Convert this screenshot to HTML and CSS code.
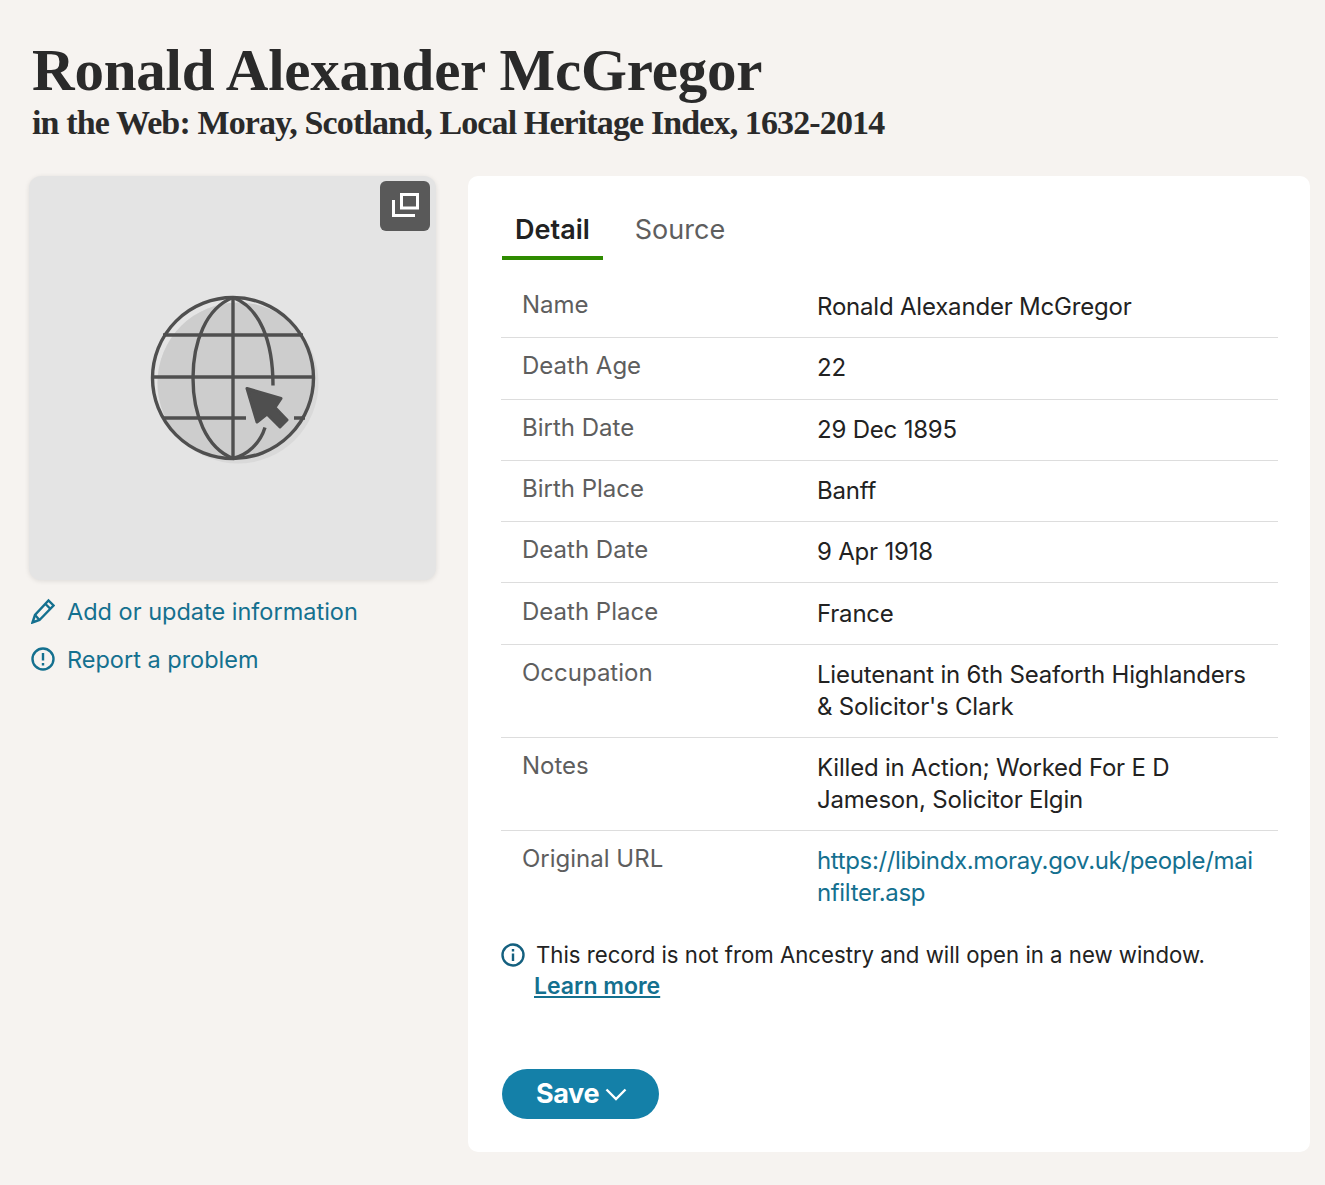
FILE: index.html
```html
<!DOCTYPE html>
<html lang="en">
<head>
    <meta charset="UTF-8">
    <title>Ronald Alexander McGregor</title>
    <link rel="stylesheet" href="styles.css">
</head>
<body>

<header class="page-title">
    <h1>Ronald Alexander McGregor</h1>
    <h2>in the Web: Moray, Scotland, Local Heritage Index, 1632-2014</h2>
</header>

<div class="layout">
    <!-- Left column -->
    <aside class="side">
        <div class="media">
            <button class="media-btn">
                <svg width="30" height="30" viewBox="0 0 30 30" fill="none" stroke="#fff" stroke-width="3">
                    <rect x="11.500" y="3.500" width="16" height="13.500"/>
                    <path d="M3.500 9v15.500h21.500"/>
                </svg>
            </button>
            <svg class="globe" width="176" height="176" viewBox="0 0 176 176" fill="none">
                <defs>
                    <clipPath id="globe-clip"><circle cx="84" cy="84" r="80.500"/></clipPath>
                </defs>
                <circle cx="89" cy="89" r="80.500" fill="#d9d9d9"/>
                <circle cx="89" cy="89" r="80.500" fill="#cdcdcd" clip-path="url(#globe-clip)"/>
                <g stroke="#4f4f4f" stroke-width="3.400">
                    <circle cx="84" cy="84" r="80.500"/>
                    <path d="M84 3.500v161"/>
                    <path d="M84 3.500C57 14 44 48 44 84s13 70 40 80.500"/>
                    <path d="M84 3.500c27 10 40 44 40 88"/>
                    <path d="M84 164.500c15-4 27-15 32-31"/>
                    <path d="M3.500 83h161"/>
                    <path d="M14 41h140"/>
                    <path d="M14 124h83M145 124h11"/>
                </g>
                <path d="M98 94.500l34 10-6 9 12 12.500-7 7-13-13-10 8z" fill="#4f4f4f" stroke="#4f4f4f" stroke-width="3" stroke-linejoin="round"/>
            </svg>
        </div>
        <a class="side-link" href="#">
            <svg width="24" height="26" viewBox="0 0 24 26" fill="none" stroke="#14708f" stroke-width="2.400">
                <path d="M1.500 24.500l2.500-7.500L17.500 2.500l5 5L8.500 22z"/>
                <path d="M14.500 6l5 5M4 17l4.500 5"/>
            </svg>
            Add or update information
        </a>
        <a class="side-link" href="#">
            <svg width="24" height="24" viewBox="0 0 24 24" fill="none" stroke="#14708f" stroke-width="2.400">
                <circle cx="12" cy="12" r="10.500"/>
                <path d="M12 6v7.500M12 16v2.500"/>
            </svg>
            Report a problem
        </a>
    </aside>

    <!-- Record card -->
    <main class="card">
        <nav class="tabs">
            <a class="tab active" href="#">Detail</a>
            <a class="tab" href="#">Source</a>
        </nav>

        <div class="facts">
            <div class="fact"><span class="label">Name</span><span class="value">Ronald Alexander McGregor</span></div>
            <div class="fact"><span class="label">Death Age</span><span class="value">22</span></div>
            <div class="fact"><span class="label">Birth Date</span><span class="value">29 Dec 1895</span></div>
            <div class="fact"><span class="label">Birth Place</span><span class="value">Banff</span></div>
            <div class="fact"><span class="label">Death Date</span><span class="value">9 Apr 1918</span></div>
            <div class="fact"><span class="label">Death Place</span><span class="value">France</span></div>
            <div class="fact"><span class="label">Occupation</span><span class="value">Lieutenant in 6th Seaforth Highlanders &amp; Solicitor's Clark</span></div>
            <div class="fact"><span class="label">Notes</span><span class="value">Killed in Action; Worked For E D Jameson, Solicitor Elgin</span></div>
            <div class="fact"><span class="label">Original URL</span><span class="value url"><a href="#">https://libindx.moray.gov.uk/people/mainfilter.asp</a></span></div>
        </div>

        <div class="notice">
            <svg width="24" height="24" viewBox="0 0 24 24" fill="none" stroke="#14607f" stroke-width="2.400">
                <circle cx="12" cy="12" r="10.500"/>
                <path d="M12 10.500v7.500M12 6v2.500"/>
            </svg>
            <p>This record is not from Ancestry and will open in a new window.<br><a href="#">Learn more</a></p>
        </div>

        <button class="save">Save
            <svg width="22" height="14" viewBox="0 0 22 14" fill="none" stroke="#fff" stroke-width="2.400">
                <path d="M1.500 2.500L11 12l9.500-9.500"/>
            </svg>
        </button>
    </main>
</div>

</body>
</html>
```

FILE: styles.css
```css
* { margin: 0; padding: 0; box-sizing: border-box; }
body { background: #f6f3f0; color: #222; font-family: Inter, "Liberation Sans", sans-serif; font-size: 24px; }
a { color: #14708f; text-decoration: none; }

.page-title { padding: 36px 0 0 32px; height: 176px; font-family: "Liberation Serif", serif; color: #2a2a2a; }
.page-title h1 { font-size: 59px; line-height: 68px; font-weight: 700; letter-spacing: -0.2px; }
.page-title h2 { font-size: 34px; line-height: 38px; font-weight: 700; letter-spacing: -0.88px; }

.layout { display: flex; align-items: flex-start; padding: 0 15px 0 29px; gap: 32px; }

.side { width: 407px; flex-shrink: 0; }
.media { position: relative; height: 404px; background: #e4e4e4; border-radius: 12px; box-shadow: 0 1px 5px rgba(0, 0, 0, 0.1); display: flex; align-items: center; justify-content: center; margin-bottom: 13px; }
.media-btn { position: absolute; top: 5px; right: 6px; width: 50px; height: 50px; background: #595959; border: none; border-radius: 6px; display: flex; align-items: center; justify-content: center; }
.globe { margin: 8px 0 0 9px; }
.side-link { display: flex; align-items: center; gap: 12px; margin: 0 0 12px 2px; height: 36px; font-size: 23.5px; }

.card { flex: 1; height: 976px; background: #fff; border-radius: 10px; padding: 23px 32px 0 33px; }

.tabs { display: flex; gap: 19px; height: 61px; margin: 0 0 17px 1px; }
.tab { padding: 14px 13px 0; height: 61px; color: #5e5e5e; font-size: 27px; }
.tab.active { color: #222; font-weight: 600; border-bottom: 4px solid #2e8b00; }

.fact { display: flex; padding: 14.15px 0; line-height: 32px; border-bottom: 1px solid #ddd; }
.fact:last-child { border-bottom: none; }
.label { flex: 0 0 316px; padding-left: 21px; color: #5e5e5e; margin-top: -2px; }
.value { flex: 1; padding-right: 22px; letter-spacing: -0.2px; }
.url { word-break: break-all; letter-spacing: -0.35px; }

.notice { display: flex; gap: 11px; margin-top: 15px; line-height: 31px; font-size: 22.2px; }
.notice svg { flex-shrink: 0; margin-top: 4px; }
.notice a { font-size: 23px; font-weight: 600; text-decoration: underline; margin-left: -2px; }

.save { display: flex; align-items: center; gap: 6px; margin: 67px 0 0 1px; width: 157px; height: 50px; padding-left: 34px; background: #1480a8; color: #fff; border: none; border-radius: 25px; font: 700 27px Inter, "Liberation Sans", sans-serif; letter-spacing: -0.4px; }
```
